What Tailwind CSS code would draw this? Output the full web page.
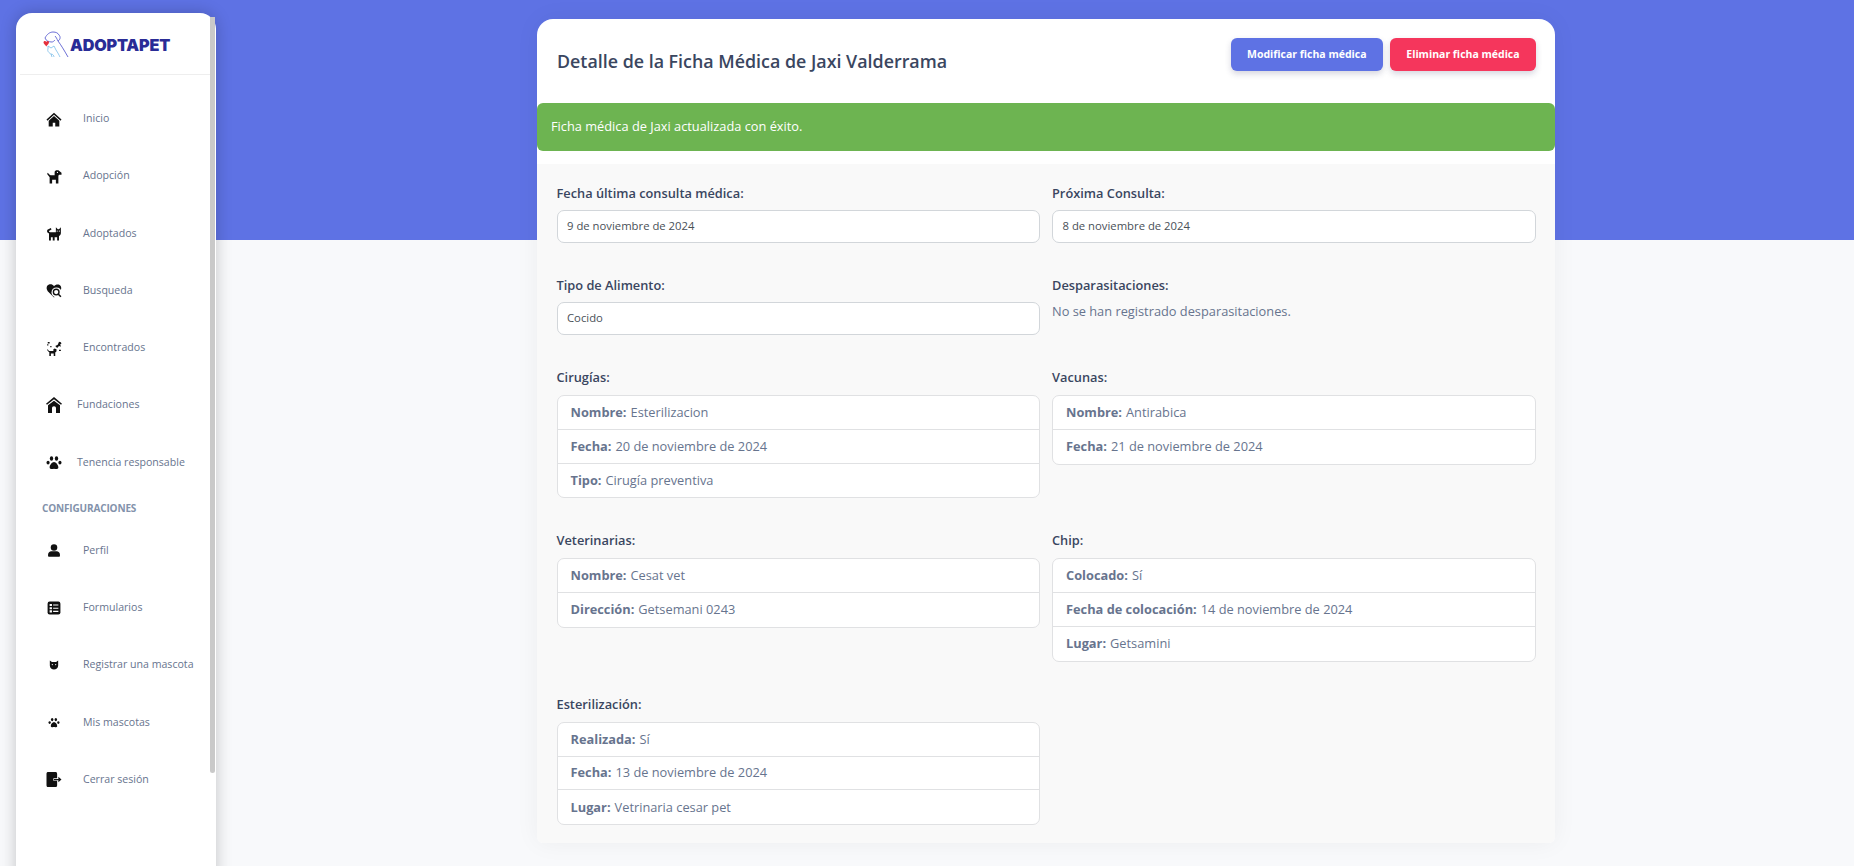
<!DOCTYPE html>
<html lang="es">
<head>
    <meta charset="UTF-8">
    <title>Detalle de la Ficha Médica</title>
    <script src="https://cdn.jsdelivr.net/npm/@tailwindcss/browser@4"></script>
</head>
<body class="bg-[#f8f9fb] font-['Open_Sans',sans-serif]">
<div class="relative h-[866px] overflow-hidden flex">
    <!-- banda azul -->
    <div class="absolute inset-x-0 top-0 h-[240px] bg-[#5e72e4]"></div>

    <!-- Sidebar -->
    <aside class="relative z-10 ml-4 mt-[13px] w-[200px] h-[900px] shrink-0 bg-white rounded-t-2xl shadow-[0_0_16px_rgba(0,0,0,0.22)]">
        <div class="absolute right-[1px] top-[4px] w-[5px] h-[756px] bg-[#c9c9c9] rounded-b"></div>
        <div class="h-[62px] mx-1 mr-[6px] border-b border-[#eeeeee] flex items-start pl-[23px] pt-[18px]">
            <svg class="w-[27px] h-[27px] shrink-0" viewBox="0 0 27 27" fill="none">
                <path d="M2 7C4 3 7 1 10 1c3 0 5 1 6 3 2 2 1 5-1 6-1-2-2-4-3-5M2 7c1 3 4 4 7 4 1 0 2-1 3-2M15 10c3 4 6 9 10 16" stroke="#5b5fd0" stroke-width="0.9"/>
                <path d="M5 15v3c-1 2 1 4 3 5l1 3M5 15l3 2 3-2 2 4c2 3 3 5 4 7M8 23c2 0 3 2 3 3" stroke="#79bde9" stroke-width="0.8"/>
                <path d="M0.500 11.500C0.500 9.500 2.800 9.500 3.300 11 3.800 9.500 6 9.500 6 11.500 6 13 4 14 3.300 15.500 2.600 14 .5 13 .5 11.500z" fill="#e5303c"/>
            </svg>
            <span class="mt-[4px] text-[16.2px] leading-[20px] font-black tracking-[-0.2px] text-[#2a2c96] font-['Inter',sans-serif]">ADOPTAPET</span>
        </div>
        <nav class="mt-[15.5px] text-[10.6px] text-[#67748e]">
            <a class="flex items-center h-[57.25px] pl-[26px]">
                <svg class="w-6 h-[15px] shrink-0" viewBox="0 0 24 24" fill="#111"><path d="M12 1 0 12l1.500 1.800L12 4.400l10.500 9.400L24 12z"/><path d="M12 6.500 3.500 14v9H10v-6h4v6h6.500v-9z"/></svg>
                <span class="ml-[17px]">Inicio</span>
            </a>
            <a class="flex items-center h-[57.25px] pl-[26px]">
                <svg class="w-6 h-[15px] shrink-0" viewBox="0 0 24 24" fill="#111"><path d="M2 6l3 3c1 1 2 1 3 1h5V5c0-2 2-3 4-3h2l5 4v3h-4c-1 1-1 2-1 4v10h-4v-6H9v6H5V13L1 8z"/><circle cx="17.500" cy="5.500" r="1" fill="#fff"/></svg>
                <span class="ml-[17px]">Adopción</span>
            </a>
            <a class="flex items-center h-[57.25px] pl-[26px]">
                <svg class="w-6 h-[15px] shrink-0" viewBox="0 0 24 24" fill="#111"><path d="M4 10h11V2l3 3h2l3-3v9c0 2-1 4-3 5v7h-3v-5h-4v5h-3v-5H7v5H4z"/><path d="M5 12C0 11 0 6 3 5l4-2 1 2.500L4.500 7.500C3.500 8.500 4 9.500 5.500 9.500z"/><circle cx="17" cy="8" r="1" fill="#fff"/><circle cx="20.500" cy="8" r="1" fill="#fff"/></svg>
                <span class="ml-[17px]">Adoptados</span>
            </a>
            <a class="flex items-center h-[57.25px] pl-[26px]">
                <svg class="w-6 h-[15px] shrink-0" viewBox="0 0 24 24" fill="#111"><path d="M12 23 2 13C-1 9 0 4 4 2.500 7 1.500 10 2.500 12 5c2-2.500 6-3.500 9-2 3 1.500 3 6 2 8z"/><circle cx="16" cy="15" r="8" fill="#fff"/><circle cx="15.500" cy="14.500" r="4.500" fill="none" stroke="#111" stroke-width="2.200"/><path d="M19 18l4 4" stroke="#111" stroke-width="2.500"/></svg>
                <span class="ml-[17px]">Busqueda</span>
            </a>
            <a class="flex items-center h-[57.25px] pl-[26px]">
                <svg class="w-6 h-[15px] shrink-0" viewBox="0 0 24 24" fill="#111"><path d="M2 13c1 2 2 3 4 3h5v-3l2-1 3 1v3c0 1-1 2-2 2v6h-2.500v-4H7v4H4.500v-6C3 17 1 15 1 14z"/><path d="M14 8l4-2 2-5 3 1 1 2-2 1 1 4-3-1-3 3z"/><path d="M2 1.500h3v2.500H2zM1 5h2v2H1zM6 8h2v2H6zM20 14h3v2h-3z"/></svg>
                <span class="ml-[17px]">Encontrados</span>
            </a>
            <a class="flex items-center h-[57.25px] pl-[26px]">
                <svg class="w-6 h-[16px] shrink-0" viewBox="0 0 24 24" fill="#111"><path d="M12 0 0 10l1.500 1.800L12 3.500l10.500 8.300L24 10z"/><path d="M12 5.500 3 12.500V24h6v-7c0-2 1-3 3-3s3 1 3 3v7h6V12.500z"/></svg>
                <span class="ml-[11px]">Fundaciones</span>
            </a>
            <a class="flex items-center h-[57.25px] pl-[26px]">
                <svg class="w-6 h-[15px] shrink-0" viewBox="0 0 24 24" fill="#111"><ellipse cx="2.500" cy="12" rx="2.500" ry="3"/><ellipse cx="8" cy="5.500" rx="2.700" ry="3.500"/><ellipse cx="16" cy="5.500" rx="2.700" ry="3.500"/><ellipse cx="21.500" cy="12" rx="2.500" ry="3"/><path d="M12 11c3 0 7 5 7 8.500 0 2.500-2 3-4 3-1 0-2-.5-3-.5s-2 .5-3 .5c-2 0-4-.5-4-3C5 16 9 11 12 11z"/></svg>
                <span class="ml-[11px]">Tenencia responsable</span>
            </a>
            <div class="h-[31px] flex items-center pl-[26px] pt-[3px] text-[10px] tracking-[-0.15px] font-bold uppercase text-[#8392ab]">Configuraciones</div>
            <a class="flex items-center h-[57.25px] pl-[26px]">
                <svg class="w-6 h-[13px] shrink-0" viewBox="0 0 24 24" fill="#111"><circle cx="12" cy="6.500" r="6"/><path d="M1 20c0-4 3-6.500 6-6.500h10c3 0 6 2.500 6 6.500v1.500c0 1-1 2-2 2H3c-1 0-2-1-2-2z"/></svg>
                <span class="ml-[17px]">Perfil</span>
            </a>
            <a class="flex items-center h-[57.25px] pl-[26px]">
                <svg class="w-6 h-[14px] shrink-0" viewBox="0 0 24 24"><rect x="1" y="1" width="22" height="22" rx="3.500" fill="#111"/><path d="M4.500 5h4v3.500h-4zM4.500 10.500h4V14h-4zM4.500 16h4v3.500h-4z" fill="#fff"/><path d="M10.500 6.800h9M10.500 12.300h9M10.500 17.800h9" stroke="#fff" stroke-width="1.800"/></svg>
                <span class="ml-[17px]">Formularios</span>
            </a>
            <a class="flex items-center h-[57.25px] pl-[26px]">
                <svg class="w-6 h-[10px] shrink-0" viewBox="0 0 24 24" fill="#111"><path d="M2 1l5 4h10l5-4v12c0 6-5 10-10 10S2 19 2 13z"/><circle cx="8" cy="11" r="1.500" fill="#fff"/><circle cx="16" cy="11" r="1.500" fill="#fff"/></svg>
                <span class="ml-[17px]">Registrar una mascota</span>
            </a>
            <a class="flex items-center h-[57.25px] pl-[26px]">
                <svg class="w-6 h-[11px] shrink-0" viewBox="0 0 24 24" fill="#111"><ellipse cx="2.500" cy="12" rx="2.500" ry="3"/><ellipse cx="8" cy="5.500" rx="2.700" ry="3.500"/><ellipse cx="16" cy="5.500" rx="2.700" ry="3.500"/><ellipse cx="21.500" cy="12" rx="2.500" ry="3"/><path d="M12 11c3 0 7 5 7 8.500 0 2.500-2 3-4 3-1 0-2-.5-3-.5s-2 .5-3 .5c-2 0-4-.5-4-3C5 16 9 11 12 11z"/></svg>
                <span class="ml-[17px]">Mis mascotas</span>
            </a>
            <a class="flex items-center h-[57.25px] pl-[26px]">
                <svg class="w-6 h-[15px] shrink-0" viewBox="0 0 24 24" fill="#111"><path d="M3 0h11c2 0 3 1 3 3v7h-6v4h6v7c0 2-1 3-3 3H3c-2 0-3-1-3-3V3c0-2 1-3 3-3z"/><path d="M12 11h7V7.500l5 4.500-5 4.500V13h-7z"/></svg>
                <span class="ml-[17px]">Cerrar sesión</span>
            </a>
        </nav>
    </aside>

    <!-- Ficha -->
    <main class="relative z-10 ml-[321px] mt-[19px] w-[1018px] h-[824px] bg-white rounded-t-2xl rounded-b-md shadow-[0_0_24px_rgba(0,0,0,0.05)]">
        <div class="h-[84px] flex items-start justify-between pl-5 pr-[19px] pt-[19px]">
            <h1 class="mt-[9px] text-[17.85px] leading-[28px] font-semibold text-[#3a4660]">Detalle de la Ficha Médica de Jaxi Valderrama</h1>
            <div class="flex gap-[7px]">
                <button class="h-[33px] px-[16.4px] rounded-md bg-[#5e72e4] text-white text-[10.5px] font-bold shadow-[0_3px_6px_rgba(50,50,93,0.2)]">Modificar ficha médica</button>
                <button class="h-[33px] px-[16.4px] rounded-md bg-[#f5365c] text-white text-[10.5px] font-bold shadow-[0_3px_6px_rgba(50,50,93,0.2)]">Eliminar ficha médica</button>
            </div>
        </div>
        <div class="h-[48px] flex items-center px-[14px] rounded-md bg-[#6db451] text-white text-[12.8px]">Ficha médica de Jaxi actualizada con éxito.</div>
        <div class="mt-[13px] h-[679px] bg-[#f9f9f9] rounded-b-md px-[19.5px] pt-[19px]">
            <div class="grid grid-cols-2 gap-x-3 gap-y-8 text-[12.8px] text-[#67748e]">
                <div>
                    <label class="block mb-[7px] h-5 leading-5 font-semibold text-[#3a4660]">Fecha última consulta médica:</label>
                    <div class="h-[33px] flex items-center px-[9.5px] rounded-[7px] border border-[#d2d6da] bg-white text-[11.3px] text-[#495057]">9 de noviembre de 2024</div>
                </div>
                <div>
                    <label class="block mb-[7px] h-5 leading-5 font-semibold text-[#3a4660]">Próxima Consulta:</label>
                    <div class="h-[33px] flex items-center px-[9.5px] rounded-[7px] border border-[#d2d6da] bg-white text-[11.3px] text-[#495057]">8 de noviembre de 2024</div>
                </div>
                <div>
                    <label class="block mb-[7px] h-5 leading-5 font-semibold text-[#3a4660]">Tipo de Alimento:</label>
                    <div class="h-[33px] flex items-center px-[9.5px] rounded-[7px] border border-[#d2d6da] bg-white text-[11.3px] text-[#495057]">Cocido</div>
                </div>
                <div>
                    <label class="block mb-[7px] h-5 leading-5 font-semibold text-[#3a4660]">Desparasitaciones:</label>
                    <p class="mt-[1px]">No se han registrado desparasitaciones.</p>
                </div>
                <div>
                    <label class="block mb-2 h-5 leading-5 font-semibold text-[#3a4660]">Cirugías:</label>
                    <ul class="rounded-[7px] border border-[#e0e1e3] bg-white divide-y divide-[#e0e1e3]">
                        <li class="h-[33.8px] flex items-center px-[13px] gap-1"><b>Nombre:</b> Esterilizacion</li>
                        <li class="h-[33.8px] flex items-center px-[13px] gap-1"><b>Fecha:</b> 20 de noviembre de 2024</li>
                        <li class="h-[33.8px] flex items-center px-[13px] gap-1"><b>Tipo:</b> Cirugía preventiva</li>
                    </ul>
                </div>
                <div>
                    <label class="block mb-2 h-5 leading-5 font-semibold text-[#3a4660]">Vacunas:</label>
                    <ul class="rounded-[7px] border border-[#e0e1e3] bg-white divide-y divide-[#e0e1e3]">
                        <li class="h-[33.8px] flex items-center px-[13px] gap-1"><b>Nombre:</b> Antirabica</li>
                        <li class="h-[33.8px] flex items-center px-[13px] gap-1"><b>Fecha:</b> 21 de noviembre de 2024</li>
                    </ul>
                </div>
                <div>
                    <label class="block mb-2 h-5 leading-5 font-semibold text-[#3a4660]">Veterinarias:</label>
                    <ul class="rounded-[7px] border border-[#e0e1e3] bg-white divide-y divide-[#e0e1e3]">
                        <li class="h-[33.8px] flex items-center px-[13px] gap-1"><b>Nombre:</b> Cesat vet</li>
                        <li class="h-[33.8px] flex items-center px-[13px] gap-1"><b>Dirección:</b> Getsemani 0243</li>
                    </ul>
                </div>
                <div>
                    <label class="block mb-2 h-5 leading-5 font-semibold text-[#3a4660]">Chip:</label>
                    <ul class="rounded-[7px] border border-[#e0e1e3] bg-white divide-y divide-[#e0e1e3]">
                        <li class="h-[33.8px] flex items-center px-[13px] gap-1"><b>Colocado:</b> Sí</li>
                        <li class="h-[33.8px] flex items-center px-[13px] gap-1"><b>Fecha de colocación:</b> 14 de noviembre de 2024</li>
                        <li class="h-[33.8px] flex items-center px-[13px] gap-1"><b>Lugar:</b> Getsamini</li>
                    </ul>
                </div>
                <div>
                    <label class="block mb-2 h-5 leading-5 font-semibold text-[#3a4660]">Esterilización:</label>
                    <ul class="rounded-[7px] border border-[#e0e1e3] bg-white divide-y divide-[#e0e1e3]">
                        <li class="h-[33.8px] flex items-center px-[13px] gap-1"><b>Realizada:</b> Sí</li>
                        <li class="h-[33.8px] flex items-center px-[13px] gap-1"><b>Fecha:</b> 13 de noviembre de 2024</li>
                        <li class="h-[33.8px] flex items-center px-[13px] gap-1"><b>Lugar:</b> Vetrinaria cesar pet</li>
                    </ul>
                </div>
            </div>
        </div>
    </main>
</div>
</body>
</html>
